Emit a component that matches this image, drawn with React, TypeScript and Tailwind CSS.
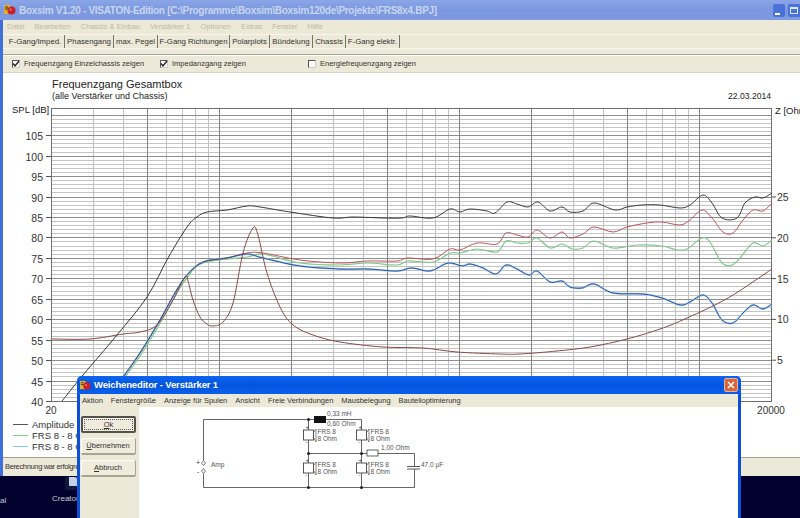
import React from "react";

type Pt = [number, number];

const ui = "font-['Liberation_Sans',sans-serif]";

// catmull-rom through the points read off the picture
function smooth(pts: Pt[]) {
  let d = `M${pts[0][0]} ${pts[0][1]}`;
  for (let i = 0; i < pts.length - 1; i++) {
    const p0 = pts[Math.max(i - 1, 0)];
    const p1 = pts[i];
    const p2 = pts[i + 1];
    const p3 = pts[Math.min(i + 2, pts.length - 1)];
    const c1x = p1[0] + (p2[0] - p0[0]) / 6;
    const c1y = p1[1] + (p2[1] - p0[1]) / 6;
    const c2x = p2[0] - (p3[0] - p1[0]) / 6;
    const c2y = p2[1] - (p3[1] - p1[1]) / 6;
    d += ` C${c1x.toFixed(1)} ${c1y.toFixed(1)} ${c2x.toFixed(1)} ${c2y.toFixed(1)} ${p2[0]} ${p2[1]}`;
  }
  return d;
}

const rise: Pt[] = [[105, 401], [123, 377], [140, 353], [160, 320], [175, 293], [187, 275]];

const amplitude: Pt[] = [[62, 401], [83, 375], [117, 335], [147, 297], [168, 258], [187, 227], [197, 217], [207, 212], [227, 210], [247, 206], [260, 207], [290, 212], [333, 218], [353, 217], [383, 218], [402, 218], [410, 216], [433, 218], [450, 209], [460, 212], [470, 209], [487, 211], [495, 213], [507, 202], [517, 204], [528, 207], [538, 202], [550, 211], [562, 207], [570, 212], [583, 211], [594, 203], [615, 210], [627, 207], [642, 205], [660, 205], [680, 208], [690, 205], [703, 195], [712, 203], [722, 218], [737, 218], [745, 203], [755, 197], [763, 198], [772, 193]];

const red: Pt[] = [...rise, [203, 262], [227, 258], [247, 253], [263, 253], [300, 260], [340, 263], [367, 261], [397, 261], [408, 258], [433, 259], [450, 249], [460, 250], [477, 243], [497, 244], [506, 233], [517, 235], [528, 237], [537, 230], [550, 238], [562, 232], [570, 238], [583, 234], [594, 227], [613, 232], [627, 227], [647, 223], [662, 222], [680, 225], [690, 220], [702, 210], [712, 218], [723, 232], [733, 233], [743, 220], [753, 210], [763, 211], [772, 203]];

const green: Pt[] = [[107, 401], [125, 377], [142, 353], [162, 320], [177, 293], [187, 278], [203, 263], [247, 257], [263, 254], [300, 263], [340, 265], [367, 263], [397, 265], [408, 261], [433, 262], [450, 253], [460, 253], [477, 249], [497, 252], [506, 241], [517, 243], [528, 243], [537, 238], [550, 248], [562, 244], [572, 249], [583, 248], [594, 241], [613, 248], [637, 245], [662, 246], [677, 250], [687, 249], [702, 238], [710, 242], [722, 263], [732, 265], [740, 258], [753, 243], [763, 246], [772, 240]];

const blue: Pt[] = [...rise, [203, 262], [227, 258], [247, 254], [263, 258], [300, 266], [340, 269], [367, 269], [397, 271], [412, 268], [430, 271], [448, 263], [462, 266], [470, 264], [483, 268], [496, 274], [506, 265], [517, 269], [529, 275], [537, 271], [550, 282], [562, 281], [570, 287], [582, 288], [594, 284], [613, 293], [643, 294], [662, 298], [680, 305], [690, 302], [703, 295], [712, 303], [722, 320], [733, 323], [743, 313], [753, 305], [763, 309], [772, 304]];

const impedance: Pt[] = [[52, 339], [90, 339], [123, 334], [140, 332], [157, 325], [172, 302], [185, 277], [188, 281], [193, 300], [200, 317], [207, 324], [213, 326], [223, 322], [233, 303], [243, 253], [253, 228], [258, 235], [267, 273], [280, 307], [293, 325], [313, 335], [340, 342], [383, 347], [423, 348], [457, 352], [500, 354], [520, 354], [557, 351], [590, 347], [627, 339], [660, 329], [687, 318], [728, 298], [772, 269]];

const xOf = (f: number) => Math.round(51 + 240 * Math.log10(f / 20)) + 0.5;
const yOf = (db: number) => Math.round(401 - (db - 40) * 4.09) + 0.5;

const majorF = [50, 100, 200, 500, 1000, 2000, 5000, 10000];
const minorF = [30, 40, 60, 70, 80, 90, 300, 400, 600, 700, 800, 900, 3000, 4000, 6000, 7000, 8000, 9000];

function Chart() {
  const dbs: number[] = [];
  for (let d = 40; d <= 110; d++) dbs.push(d);
  const left = [105, 100, 95, 90, 85, 80, 75, 70, 65, 60, 55, 50, 45, 40];
  const right = [25, 20, 15, 10, 5];
  return (
    <svg viewBox="3 100 797 318" className="w-[797px] h-[318px] shrink-0 block">
      {dbs.filter((d) => d % 5 !== 0).map((d) => (
        <line key={d} x1="51" x2="771" y1={yOf(d)} y2={yOf(d)} stroke="#c4c4c4" />
      ))}
      {minorF.map((f) => (
        <line key={f} x1={xOf(f)} x2={xOf(f)} y1="108" y2="401" stroke="#c2c2c2" />
      ))}
      {dbs.filter((d) => d % 5 === 0).map((d) => (
        <line key={d} x1="51" x2="771" y1={yOf(d)} y2={yOf(d)} stroke="#8e8e8e" />
      ))}
      {majorF.map((f) => (
        <line key={f} x1={xOf(f)} x2={xOf(f)} y1="108" y2="401" stroke="#858585" />
      ))}
      <rect x="51.5" y="108.5" width="720" height="293" fill="none" stroke="#707070" />
      {left.map((d) => (
        <g key={d}>
          <line x1="46" x2="51" y1={yOf(d)} y2={yOf(d)} stroke="#555" />
          <text x="43" y={yOf(d) + 4} textAnchor="end" fontSize="10.5" fill="#333" fontFamily="Liberation Sans">{d}</text>
        </g>
      ))}
      {right.map((z) => (
        <g key={z}>
          <line x1="771" x2="776" y1={401 - z * 8.16} y2={401 - z * 8.16} stroke="#555" />
          <text x="777" y={401 - z * 8.16 + 4} fontSize="10.5" fill="#333" fontFamily="Liberation Sans">{z}</text>
        </g>
      ))}
      <text x="12" y="113" fontSize="9.5" fill="#222" fontFamily="Liberation Sans">SPL [dB]</text>
      <text x="775" y="114" fontSize="9.5" fill="#222" fontFamily="Liberation Sans">Z [Ohm]</text>
      <text x="51" y="414" textAnchor="middle" fontSize="10" fill="#333" fontFamily="Liberation Sans">20</text>
      <text x="771" y="414" textAnchor="middle" fontSize="10" fill="#333" fontFamily="Liberation Sans">20000</text>
      <path d={smooth(blue)} fill="none" stroke="#a8d4f0" strokeWidth="2" />
      <path d={smooth(green)} fill="none" stroke="#7fc98a" strokeWidth="1.2" />
      <path d={smooth(red)} fill="none" stroke="#c0545a" strokeWidth="1" />
      <path d={smooth(blue)} fill="none" stroke="#2c4f9e" strokeWidth="1" />
      <path d={smooth(impedance)} fill="none" stroke="#8a4a4a" strokeWidth="1" />
      <path d={smooth(amplitude)} fill="none" stroke="#3a3a3a" strokeWidth="1" />
    </svg>
  );
}

function AppIcon({ className }: { className: string }) {
  return (
    <svg viewBox="0 0 12 12" className={className}>
      <rect x="0" y="1" width="6" height="9" fill="#e8b020" />
      <path d="M1 3h3M1 5h3" stroke="#333" />
      <circle cx="7.5" cy="6.5" r="4" fill="#c8202a" />
      <circle cx="6.5" cy="5.5" r="1.2" fill="#e86a60" />
    </svg>
  );
}

function Speaker({ x, y }: { x: number; y: number }) {
  return (
    <g>
      <rect x={x - 5} y={y} width="10" height="10" fill="#fff" stroke="#444" strokeWidth="0.9" />
      <path d={`M${x + 5.5} ${y + 2}L${x + 7.5} ${y - 1}V${y + 12}L${x + 5.5} ${y + 8}`} fill="#fff" stroke="#555" strokeWidth="0.7" />
      <text x={x - 3} y={y - 1} fontSize="6" fill="#444">+</text>
      <text x={x - 3} y={y + 14} fontSize="6" fill="#444">-</text>
      <text x={x + 9} y={y + 4} fontSize="6.5" fill="#555">FRS 8</text>
      <text x={x + 9} y={y + 11} fontSize="6.5" fill="#555">8 Ohm</text>
    </g>
  );
}

function Circuit() {
  const dots: Pt[] = [[308, 419], [308, 453], [361, 453], [308, 487], [361, 487]];
  return (
    <svg viewBox="139 407 598 111" className="w-[598px] h-[111px] block" fontFamily="Liberation Sans">
      <path
        d="M203.5 460V419.5H361.5V430M308.5 419.5V430M308.5 440V463M361.5 440V463M308.5 473V487.5M361.5 473V487.5M203.5 474V487.5H414.5V469M414.5 466V453.5H308.5"
        fill="none"
        stroke="#666"
        strokeWidth="1"
      />
      <rect x="314" y="416" width="12" height="7" fill="#111" />
      <rect x="367" y="450" width="11" height="6" fill="#fff" stroke="#555" strokeWidth="0.9" />
      <path d="M407 466.5H420M407 469H420" stroke="#555" strokeWidth="1" />
      {dots.map(([x, y]) => (
        <circle key={`${x}-${y}`} cx={x + 0.5} cy={y + 0.5} r="1.5" fill="#222" />
      ))}
      <Speaker x={308.5} y={430} />
      <Speaker x={361.5} y={430} />
      <Speaker x={308.5} y={463} />
      <Speaker x={361.5} y={463} />
      <path d="M203.5 460.5l2 2.5-2 2.5-2-2.5zM203.5 468.5l2 2.5-2 2.5-2-2.5z" fill="#fff" stroke="#555" strokeWidth="0.8" />
      <text x="196" y="465" fontSize="7" fill="#333">+</text>
      <text x="197" y="474" fontSize="7" fill="#333">-</text>
      <text x="211" y="467" fontSize="6.5" fill="#555">Amp</text>
      <text x="327" y="416" fontSize="6.5" fill="#555">0,33 mH</text>
      <text x="327" y="426" fontSize="6.5" fill="#555">0,60 Ohm</text>
      <text x="381" y="450" fontSize="6.5" fill="#555">1,00 Ohm</text>
      <text x="421" y="467" fontSize="6.5" fill="#555">47,0 µF</text>
    </svg>
  );
}

const topMenu = ["Datei", "Bearbeiten", "Chassis & Einbau", "Verstärker 1", "Optionen", "Extras", "Fenster", "Hilfe"];
const tabs = [
  { label: "Phasengang", cls: "w-[49px]" },
  { label: "max. Pegel", cls: "w-[44px]" },
  { label: "F-Gang Richtungen", cls: "w-[72px]" },
  { label: "Polarplots", cls: "w-[40px]" },
  { label: "Bündelung", cls: "w-[43px]" },
  { label: "Chassis", cls: "w-[33px]" },
  { label: "F-Gang elektr.", cls: "w-[54px]" },
];
const dialogMenu = ["Aktion", "Fenstergröße", "Anzeige für Spulen", "Ansicht", "Freie Verbindungen", "Mausbelegung", "Bauteiloptimierung"];

function Check({ on, label, cls }: { on: boolean; label: string; cls: string }) {
  return (
    <div className={`flex items-center gap-[4px] whitespace-nowrap ${cls}`}>
      <div className="w-[8px] h-[8px] border border-t-[#555] border-l-[#555] border-r-[#ccc] border-b-[#ccc] bg-white flex items-center justify-center">
        {on && (
          <svg viewBox="0 0 8 8" className="w-[8px] h-[8px] shrink-0">
            <path d="M1 3.5l2 2.5 4-5" fill="none" stroke="#222" strokeWidth="1.4" />
          </svg>
        )}
      </div>
      <span>{label}</span>
    </div>
  );
}

function DlgButton({ first, rest, focus }: { first: string; rest: string; focus?: boolean }) {
  return (
    <button
      className={`w-[55px] h-[17px] flex items-center justify-center text-[7.5px] text-[#333] bg-[#efebdd] rounded-[2px] shadow-[inset_1px_1px_0_#fff] ${
        focus
          ? "border-2 border-[#55524a] outline outline-dotted outline-1 -outline-offset-4 outline-[#555]"
          : "border-b-2 border-r border-[#a8a490]"
      }`}
    >
      <span className="underline">{first}</span>
      {rest}
    </button>
  );
}

function Dialog() {
  return (
    <div className="absolute left-[77px] top-[376px] w-[664px] h-[150px] flex flex-col rounded-t-[5px] bg-[#0a50d8] px-[3px] pb-[3px]">
      <div className="h-[18px] shrink-0 -mx-[3px] px-[3px] rounded-t-[5px] flex items-center gap-[3px] bg-gradient-to-b from-[#0c66ee] via-[#0454e0] to-[#0a5ee8]">
        <AppIcon className="w-[11px] h-[11px] shrink-0" />
        <span className="text-[9.5px] font-bold text-white tracking-[-0.15px]">Weicheneditor - Verstärker 1</span>
        <div className="ml-auto w-[14px] h-[14px] rounded-[2px] bg-[#d9643c] border border-[#e8b4a0] flex items-center justify-center">
          <svg viewBox="0 0 10 10" className="w-[10px] h-[10px]">
            <path d="M2 2l6 6M8 2l-6 6" stroke="#fff" strokeWidth="1.6" />
          </svg>
        </div>
      </div>
      <div className="h-[13px] shrink-0 bg-[#ece9d8] flex items-center gap-[8px] pl-[2px] text-[7.5px] text-[#333]">
        {dialogMenu.map((m) => (
          <span key={m}>{m}</span>
        ))}
      </div>
      <div className="flex flex-1 min-h-0">
        <div className="w-[59px] shrink-0 bg-[#ece9d8] flex flex-col gap-[5px] pt-[9px] pl-[1px]">
          <DlgButton first="O" rest="k" focus />
          <DlgButton first="Ü" rest="bernehmen" />
          <DlgButton first="A" rest="bbruch" />
        </div>
        <div className="flex-1 bg-white overflow-hidden">
          <Circuit />
        </div>
      </div>
    </div>
  );
}

export default function App() {
  return (
    <div className={`relative w-[800px] h-[518px] overflow-hidden bg-[#01012e] flex flex-col ${ui}`}>
      <div className="h-[476px] shrink-0 flex flex-col border-l-[3px] border-[#3f6fd8] bg-[#ece9d8]">
        {/* title bar */}
        <div className="h-[20px] shrink-0 -ml-[3px] pl-[4px] flex items-center gap-[3px] bg-gradient-to-b from-[#8aa6e8] via-[#7b98de] to-[#7f9ce2]">
          <AppIcon className="w-[12px] h-[12px] shrink-0" />
          <span className="text-[10px] font-bold text-[#c9d5f2] tracking-[-0.3px] whitespace-nowrap">
            Boxsim V1.20 - VISATON-Edition [C:\Programme\Boxsim\Boxsim120de\Projekte\FRS8x4.BPJ]
          </span>
          <div className="ml-auto flex gap-[3px]">
            <div className="w-[12px] h-[13px] rounded-[2px] bg-[#4a72d8] flex items-end pl-[2px] pb-[2px]">
              <div className="w-[5px] h-[2px] bg-white" />
            </div>
            <div className="w-[12px] h-[13px] rounded-l-[2px] bg-[#4a72d8] flex items-center justify-center">
              <div className="w-[8px] h-[7px] border border-[#dfe7fa] border-t-2" />
            </div>
          </div>
        </div>
        {/* menu */}
        <div className="h-[14px] shrink-0 flex items-center gap-[10px] pl-[4px] text-[7.5px] text-[#bdb9a4]">
          {topMenu.map((m) => (
            <span key={m}>{m}</span>
          ))}
        </div>
        {/* tabs */}
        <div className="h-[15px] shrink-0 border-y border-[#f8f6ec] flex items-center text-[7.8px] text-[#333] pl-[3px]">
          <div className="w-[59px] h-full flex items-center justify-center border-r border-[#77746a]">F-Gang/Imped.</div>
          {tabs.map((t) => (
            <div key={t.label} className={`${t.cls} h-full flex items-center justify-center border-r border-[#77746a] whitespace-nowrap`}>
              {t.label}
            </div>
          ))}
        </div>
        {/* options */}
        <div className="h-[18px] mt-[5px] shrink-0 border-t border-[#a8a594] flex items-center pl-[9px] text-[7.5px] text-[#333] shadow-[inset_0_1px_0_#fff]">
          <Check on label="Frequenzgang Einzelchassis zeigen" cls="w-[148px]" />
          <Check on label="Impedanzgang zeigen" cls="w-[148px]" />
          <Check on={false} label="Energiefrequenzgang zeigen" cls="w-[200px]" />
        </div>
        {/* plot area */}
        <div className="flex-1 min-h-0 bg-white flex flex-col border-t border-[#d8d5c6]">
          <div className="h-[27px] shrink-0 pl-[49px] pr-[29px] flex justify-between text-[#222]">
            <div className="flex flex-col pt-[4px]">
              <span className="text-[11px] leading-[14px]">Frequenzgang Gesamtbox</span>
              <span className="text-[9px] leading-[10px]">(alle Verstärker und Chassis)</span>
            </div>
            <span className="text-[8.6px] pt-[18px] leading-[10px]">22.03.2014</span>
          </div>
          <Chart />
          <div className="flex-1 min-h-0 flex flex-col pt-[1px] pl-[10px] text-[9.5px] leading-[11px] text-[#333]">
            {[
              { c: "bg-[#555]", t: "Amplitude" },
              { c: "bg-[#7fd08a]", t: "FRS 8 - 8 Ohm" },
              { c: "bg-[#80cfe8]", t: "FRS 8 - 8 Ohm" },
            ].map((l, i) => (
              <div key={i} className="flex items-center gap-[4px] whitespace-nowrap">
                <div className={`w-[15px] h-[1px] ${l.c}`} />
                <span>{l.t}</span>
              </div>
            ))}
          </div>
        </div>
        {/* status */}
        <div className="h-[19px] shrink-0 border-t border-[#a39f8e] flex items-center pl-[2px] text-[7.5px] tracking-[-0.35px] text-[#333]">
          Berechnung war erfolgreich
        </div>
      </div>
      {/* desktop */}
      <div className="flex-1 min-h-0 flex items-start text-[8px] text-[#c8ccd8] pt-[1px]">
        <span className="w-[52px] pt-[18px]">al</span>
        <div className="flex flex-col w-[25px] whitespace-nowrap overflow-hidden">
          <div className="w-[12px] h-[13px] ml-[13px] bg-[#c4d0e8] rounded-[2px] mb-[3px] border-l-4 border-b-4 border-[#101840]" />
          <span>Creator</span>
        </div>
      </div>
      <Dialog />
    </div>
  );
}
